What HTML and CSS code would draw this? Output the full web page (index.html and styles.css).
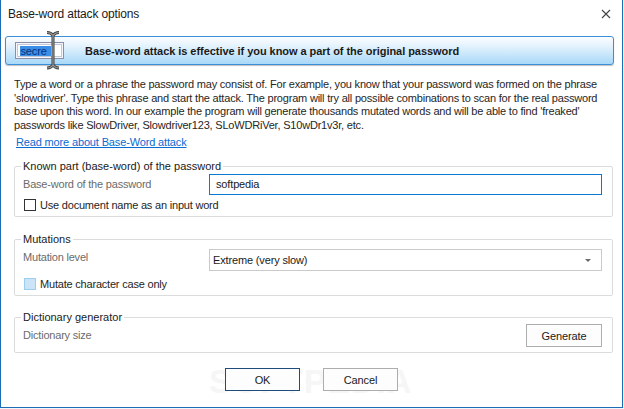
FILE: index.html
```html
<!DOCTYPE html>
<html>
<head>
<meta charset="utf-8">
<link rel="stylesheet" href="styles.css">
</head>
<body>
<div class="window">
  <div class="titlebar">
    <span class="title">Base-word attack options</span>
    <svg class="close" width="10" height="10" viewBox="0 0 10 10"><path d="M1 1 L9 9 M9 1 L1 9" stroke="#444" stroke-width="1.1" fill="none"/></svg>
  </div>
  <div class="banner">
    <svg class="banner-icon" width="50" height="40" viewBox="0 0 50 40">
      <rect x="0.5" y="11.5" width="48" height="16" fill="#f4f6fb" stroke="#8b8fa6"/>
      <rect x="2.5" y="13.5" width="44" height="12" fill="#ffffff" stroke="#c4c7d6"/>
      <rect x="5" y="15" width="31" height="10" fill="#3a8ee6"/>
      <text x="5.5" y="23.5" font-family="Liberation Sans, sans-serif" font-size="11" fill="#0b2f7a">secre</text>
      <path d="M32 1.5 Q36 1.5 38 4.5 Q40 1.5 44 1.5 M38 4.5 L38 34 M32 37 Q36 37 38 34 Q40 37 44 37" stroke="#3c3c3c" stroke-width="3" fill="none"/>
      <path d="M32 1.5 Q36 1.5 38 4.5 Q40 1.5 44 1.5 M38 4.5 L38 34 M32 37 Q36 37 38 34 Q40 37 44 37" stroke="#9a9a9a" stroke-width="1.2" fill="none"/>
    </svg>
    <span class="banner-text">Base-word attack is effective if you know a part of the original password</span>
  </div>
  <p class="desc">Type a word or a phrase the password may consist of. For example, you know that your password was formed on the phrase<br>'slowdriver'. Type this phrase and start the attack. The program will try all possible combinations to scan for the real password<br>base upon this word. In our example the program will generate thousands mutated words and will be able to find 'freaked'<br>passwords like SlowDriver, Slowdriver123, SLoWDRiVer, S10wDr1v3r, etc.</p>
  <a class="link" href="#">Read more about Base-Word attack</a>

  <fieldset class="group g1">
    <legend>Known part (base-word) of the password</legend>
    <div class="row">
      <span class="label">Base-word of the password</span>
      <div class="input">softpedia</div>
    </div>
    <div class="check"><span class="box"></span><span>Use document name as an input word</span></div>
  </fieldset>

  <fieldset class="group g2">
    <legend>Mutations</legend>
    <div class="row">
      <span class="label">Mutation level</span>
      <div class="select"><span>Extreme (very slow)</span><span class="arrow"></span></div>
    </div>
    <div class="check"><span class="box blue"></span><span>Mutate character case only</span></div>
  </fieldset>

  <fieldset class="group g3">
    <legend>Dictionary generator</legend>
    <div class="row">
      <span class="label">Dictionary size</span>
      <button class="btn gen">Generate</button>
    </div>
  </fieldset>

  <div class="buttons">
    <span class="watermark">SOFTPEDIA</span>
    <button class="btn ok">OK</button>
    <button class="btn">Cancel</button>
  </div>
</div>
</body>
</html>
```
FILE: styles.css
```css
* { box-sizing: border-box; }
html, body { margin: 0; padding: 0; background: #f3f6fa; }
body { font-family: "Liberation Sans", Arial, sans-serif; font-size: 11px; letter-spacing: -0.15px; color: #1e1e1e; }

.window {
  width: 623px;
  height: 408px;
  background: #fff;
  border: 1px solid #1c6cb6;
  border-top: none;
  display: flex;
  flex-direction: column;
  position: relative;
}

.titlebar {
  height: 28px;
  display: flex;
  align-items: center;
  justify-content: space-between;
  padding: 0 11px 0 7px;
  flex-shrink: 0;
}
.title { font-size: 12px; color: #1a1a1a; letter-spacing: -0.15px; }
.close { display: block; }

.banner {
  margin: 8px 8px 0 4px;
  height: 29px;
  border: 1px solid #3b8fd8;
  border-radius: 3px;
  background: linear-gradient(#fbfdff 0%, #e3f2fd 35%, #a9d8f8 100%);
  box-shadow: 0 1px 1px rgba(0,0,0,0.25);
  display: flex;
  align-items: center;
  flex-shrink: 0;
}
.banner-icon { display: block; margin-left: 9px; margin-top: 0; overflow: visible; }
.banner-text { font-weight: bold; margin-left: 20px; font-size: 11px; letter-spacing: -0.05px; color: #1a1a1a; }

.desc {
  margin: 13px 0 0 13px;
  line-height: 13.6px;
  color: #262626;
  letter-spacing: -0.2px;
  white-space: nowrap;
}
.link {
  margin: 4px 0 0 15px;
  line-height: 13px;
  color: #0a6bd1;
  text-decoration: underline;
  align-self: flex-start;
}

.group {
  margin: 0 9px 0 13px;
  padding: 0 10px 4px 8px;
  border: 1px solid #dcdcdc;
  border-radius: 2px;
  min-width: 0;
  flex-shrink: 0;
}
.group legend {
  padding: 0 2px;
  margin-left: -2px;
  line-height: 13px;
  color: #1a1a1a;
  letter-spacing: 0;
}
.g1 { margin-top: 11px; padding-top: 1px; }
.g2 { margin-top: 16px; padding-top: 3px; }
.g3 { margin-top: 15px; padding-top: 0; padding-bottom: 5px; }

.row { display: flex; align-items: flex-start; }
.label {
  width: 186px;
  flex-shrink: 0;
  color: #6b6b6b;
  line-height: 13px;
  letter-spacing: -0.2px;
}
.g1 .label { margin-top: 4px; }
.g2 .label { margin-top: 2px; }
.g3 .label { margin-top: 5px; flex: 1; }

.input {
  flex: 1;
  height: 21px;
  border: 1px solid #0b78d1;
  padding: 0 6px;
  line-height: 19px;
  color: #1a1a1a;
}
.select {
  flex: 1;
  height: 22px;
  border: 1px solid #cacaca;
  padding: 0 10px 0 3px;
  display: flex;
  align-items: center;
  justify-content: space-between;
  color: #1a1a1a;
}
.arrow {
  width: 0; height: 0;
  border-left: 3px solid transparent;
  border-right: 3px solid transparent;
  border-top: 3px solid #6a6a6a;
}

.check { display: flex; align-items: center; height: 14px; line-height: 13px; color: #1e1e1e; letter-spacing: -0.2px; }
.g1 .check { margin-top: 3px; }
.g2 .check { margin-top: 6px; }
.box {
  width: 12px; height: 12px;
  border: 1px solid #333;
  background: #fff;
  margin: 0 4px 0 1px;
  flex-shrink: 0;
}
.box.blue { background: #cce4f7; border-color: #9ecdf2; }

.btn {
  font-family: "Liberation Sans", Arial, sans-serif;
  font-size: 11px;
  letter-spacing: -0.1px;
  color: #1a1a1a;
  background: #fdfdfd;
  border: 1px solid #adadad;
  height: 23px;
  width: 75px;
  padding: 0;
}
.gen { width: 76px; }
.ok { border-color: #1f4c78; }

.buttons {
  margin-top: 15px;
  display: flex;
  justify-content: center;
  gap: 23px;
  position: relative;
}
.watermark {
  position: absolute;
  left: 208px;
  top: -6px;
  font-size: 34px;
  font-weight: bold;
  color: #f6f6f6;
  letter-spacing: 1px;
  pointer-events: none;
}
.buttons .btn { position: relative; }
```
